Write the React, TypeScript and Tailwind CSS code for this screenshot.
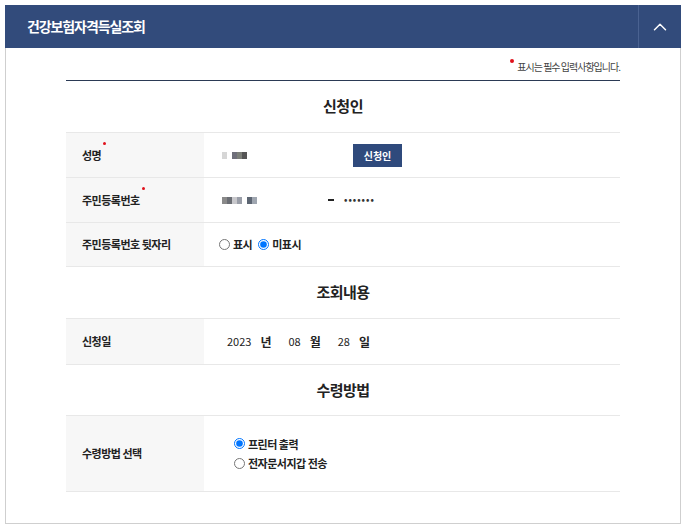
import { ChevronUp } from "lucide-react";

const font = { fontFamily: '"Noto Sans CJK KR", "Noto Sans", sans-serif' };

const Pixels = ({ cells }: { cells: string[] }) => {
  return (
    <div className="flex items-center">
      {cells.map((c, i) => (
        <span
          key={i}
          className="inline-block w-[5px] h-[7px]"
          style={{ backgroundColor: c }}
        />
      ))}
    </div>
  );
};

const Radio = ({ checked, label }: { checked?: boolean; label: string }) => {
  return (
    <label className="flex items-center gap-[3px] text-[11px] font-bold text-[#222] tracking-[-0.5px]">
      <input
        type="radio"
        readOnly
        checked={!!checked}
        className="m-0 w-[11px] h-[11px] accent-[#0075ff]"
      />
      <span>{label}</span>
    </label>
  );
};

const Row = ({
  label,
  required,
  height,
  children,
}: {
  label: string;
  required?: boolean;
  height: string;
  children: React.ReactNode;
}) => {
  return (
    <div className={`grid grid-cols-[138px_1fr] border-b border-[#e8e8e8] ${height}`}>
      <div className="bg-[#f7f7f7] flex items-center pl-4 text-[11px] font-bold text-[#222] tracking-[-0.5px]">
        <span className="relative">
          {label}
          {required && (
            <span className="absolute -right-[5px] -top-[5px] w-[3px] h-[3px] rounded-full bg-[#e0111b]" />
          )}
        </span>
      </div>
      <div className="flex items-center">{children}</div>
    </div>
  );
};

const SectionTitle = ({ title, h }: { title: string; h: string }) => {
  return (
    <div className={`flex items-center justify-center border-b border-[#e8e8e8] ${h}`}>
      <h3 className="text-[15px] font-bold text-[#222] tracking-[-0.5px]">{title}</h3>
    </div>
  );
};

export default function App() {
  return (
    <div className="w-[687px] h-[531px] bg-white pt-[5px] pl-[5px]" style={font}>
      <div className="w-[676px]">
        <div className="h-[43px] bg-[#324b7b] flex items-center">
          <h2 className="flex-1 pl-[22px] text-white text-[14px] font-bold tracking-[-1.1px]">
            건강보험자격득실조회
          </h2>
          <div className="w-[43px] h-full border-l border-[#4a6291] flex items-center justify-center">
            <ChevronUp size={22} strokeWidth={1.6} className="text-white" />
          </div>
        </div>
        <div className="border-x border-b border-[#cfcfcf] px-[60px] pb-[31px]">
          <div className="flex justify-end items-center h-[33px] pt-[4px] border-b border-[#2b3a55]">
            <span className="relative text-[10px] text-[#444] tracking-[-1px]">
              <span className="absolute -left-[7px] top-[0px] w-[4px] h-[4px] rounded-full bg-[#e0111b]" />
              표시는 필수 입력사항입니다.
            </span>
          </div>
          <SectionTitle title="신청인" h="h-[52px]" />
          <Row label="성명" required height="h-[45px]">
            <div className="w-[149px] pl-[18px]">
              <Pixels cells={["#d6d6d6", "#ffffff", "#6f6f7a", "#7c7f79", "#555"]} />
            </div>
            <button className="w-[49px] h-[23px] bg-[#2f4a7c] text-white text-[10px] font-bold">
              신청인
            </button>
          </Row>
          <Row label="주민등록번호" required height="h-[45px]">
            <div className="w-[124px] pl-[18px]">
              <Pixels cells={["#8a8a8a", "#6b6e74", "#c8c8cc", "#9a9ea8", "#fff", "#5d6673", "#9fa6b0"]} />
            </div>
            <span className="inline-block w-[6px] h-[2px] bg-[#222] mr-[10px]" />
            <span className="text-[9px] text-[#333] tracking-[1px] font-bold">•••••••</span>
          </Row>
          <Row label="주민등록번호 뒷자리" height="h-[44px]">
            <div className="flex items-center gap-[6px] pl-[15px]">
              <Radio label="표시" />
              <Radio label="미표시" checked />
            </div>
          </Row>
          <SectionTitle title="조회내용" h="h-[52px]" />
          <Row label="신청일" height="h-[46px]">
            <div className="flex items-center pl-[23px] text-[11px] text-[#222]">
              <span>2023</span>
              <span className="ml-[9px] font-bold text-[12px]">년</span>
              <span className="ml-[17px]">08</span>
              <span className="ml-[9px] font-bold text-[12px]">월</span>
              <span className="ml-[17px]">28</span>
              <span className="ml-[9px] font-bold text-[12px]">일</span>
            </div>
          </Row>
          <SectionTitle title="수령방법" h="h-[51px]" />
          <Row label="수령방법 선택" height="h-[76px]">
            <div className="flex flex-col gap-[3px] pl-[30px]">
              <Radio label="프린터 출력" checked />
              <Radio label="전자문서지갑 전송" />
            </div>
          </Row>
        </div>
      </div>
    </div>
  );
}
